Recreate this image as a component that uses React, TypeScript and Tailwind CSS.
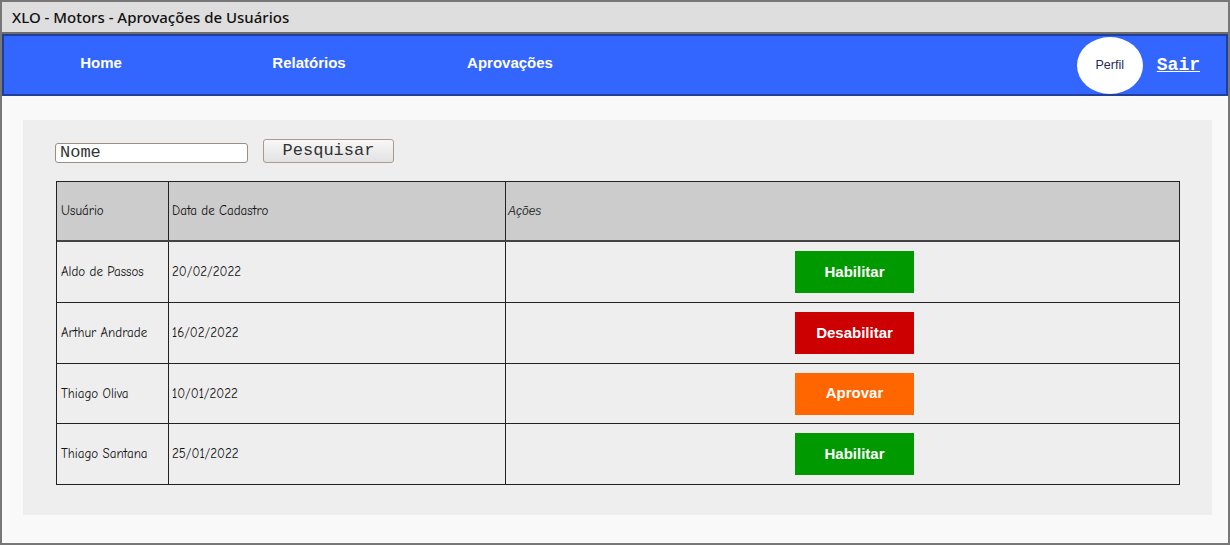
const rows = [
  { nome: "Aldo de Passos", data: "20/02/2022", acao: "Habilitar", cor: "bg-[#009900]", h: "h-[61px]" },
  { nome: "Arthur Andrade", data: "16/02/2022", acao: "Desabilitar", cor: "bg-[#cc0000]", h: "h-[61px]" },
  { nome: "Thiago Oliva", data: "10/01/2022", acao: "Aprovar", cor: "bg-[#ff6600]", h: "h-[60px]" },
  { nome: "Thiago Santana", data: "25/01/2022", acao: "Habilitar", cor: "bg-[#009900]", h: "h-[60px]" },
];

const hand = "font-['Comic_Neue','DejaVu_Sans',sans-serif]";

export default function App() {
  return (
    <div className="w-[1230px] h-[545px] border-2 border-[#777] bg-[#f9f9f9] flex flex-col overflow-hidden font-['Liberation_Sans',sans-serif]">
      {/* title bar */}
      <div className="h-[32px] shrink-0 bg-[#dedede] border-b-2 border-[#6e6e6e] flex items-center pl-[10px] text-[15px] font-medium text-[#111] font-['Noto_Sans',sans-serif]">
        XLO - Motors - Aprovações de Usuários
      </div>

      {/* nav */}
      <div className="h-[62px] shrink-0 bg-[#3366ff] border-2 border-[#1f3f99] flex items-center">
        <div className="flex items-center text-white font-bold text-[15px] -mt-[4px]">
          <span className="w-[194px] text-center">Home</span>
          <span className="w-[214px] ml-[4px] text-center">Relatórios</span>
          <span className="w-[188px] text-center">Aprovações</span>
        </div>
        <div className="ml-auto flex items-center mr-[26px]">
          <div className="w-[66px] h-[57px] rounded-[50%] bg-white flex items-center justify-center text-[12.5px] text-[#1f2a5e]">
            Perfil
          </div>
          <span className="ml-[14px] text-white font-bold underline text-[18px] font-['Liberation_Mono',monospace]">Sair</span>
        </div>
      </div>

      {/* content */}
      <div className="flex-1 pt-[24px] pl-[21px] pr-[16px]">
        <div className="bg-[#eeeeee] w-[1189px] h-[395px] pt-[19px] pl-[32px]">
          <div className="flex items-center gap-[15px]">
            <div className="w-[193px] h-[20px] mt-[3px] bg-white border border-[#9a8f86] rounded-[3px] flex items-end pl-[4px] text-[17px] leading-[18px] text-[#333] font-['Courier_New','Liberation_Mono',monospace]">
              Nome
            </div>
            <div className="w-[131px] h-[24px] bg-gradient-to-b from-[#f7f7f7] to-[#e2e2e2] border border-[#a89c92] rounded-[3px] flex items-center justify-center text-[17px] text-[#333] font-['Courier_New','Liberation_Mono',monospace]">
              Pesquisar
            </div>
          </div>

          <div className={`mt-[18px] ml-[1px] w-[1124px] border border-[#222] ${hand} text-[13px] text-[#111]`}>
            <div className="flex h-[60px] bg-[#cccccc] border-b-2 border-[#444]">
              <div className="w-[112px] border-r border-[#222] flex items-center pl-[4px]">Usuário</div>
              <div className="w-[337px] border-r border-[#222] flex items-center pl-[3px]">Data de Cadastro</div>
              <div className="flex-1 flex items-center pl-[2px] font-['Liberation_Sans',sans-serif] italic text-[12px] text-[#333]">Ações</div>
            </div>
            {rows.map((r, i) => (
              <div key={r.nome} className={`flex ${r.h} ${i < rows.length - 1 ? "border-b border-[#222]" : ""}`}>
                <div className="w-[112px] border-r border-[#222] flex items-center pl-[4px]">{r.nome}</div>
                <div className="w-[337px] border-r border-[#222] flex items-center pl-[3px]">{r.data}</div>
                <div className="flex-1 flex items-center pl-[289px]">
                  <div className={`${r.cor} w-[119px] h-[42px] flex items-center justify-center text-white font-bold text-[15px] font-['Liberation_Sans',sans-serif]`}>
                    {r.acao}
                  </div>
                </div>
              </div>
            ))}
          </div>
        </div>
      </div>
    </div>
  );
}
